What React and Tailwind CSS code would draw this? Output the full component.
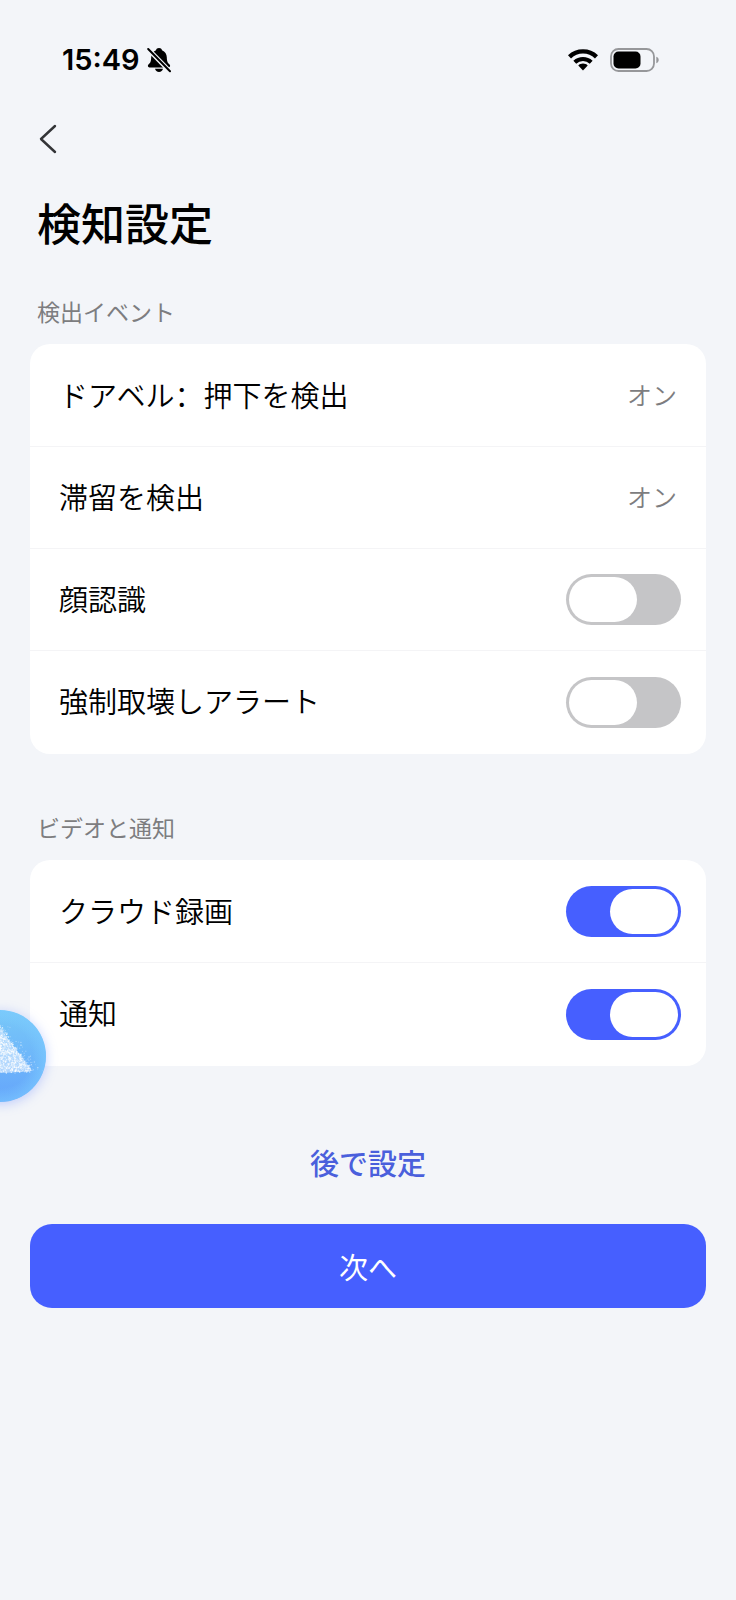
import { useId, useState } from 'react'

const DETECTION_ROWS = [
  {
    // full-width colon set low and left, not centred
    label: (
      <>
        ドアベル
        <span lang="zh-CN" className="font-['Noto_Sans_CJK_SC',sans-serif]">
          ：
        </span>
        押下を検出
      </>
    ),
    value: 'オン',
  },
  { label: '滞留を検出', value: 'オン' },
  { label: '顔認識', on: false },
  { label: '強制取壊しアラート', on: false },
]

const VIDEO_ROWS = [
  { label: 'クラウド録画', on: true },
  { label: '通知', on: true },
]

// Fixed-seed scatter, so the assistant bubble looks the same on every render.
function scatter(count, spread, opacity) {
  let seed = 7 + count
  const next = () => {
    seed = (seed * 16807) % 2147483647
    return seed / 2147483647
  }
  return Array.from({ length: count }, () => {
    const down = Math.sqrt(next())
    const side = next() * 2 - 1
    return {
      x: 43 + side * (down * 34 + 1) + next() * spread,
      y: 14 + down * 48 + (next() - 0.5) * 3,
      r: 0.4 + next() * 0.4,
      o: opacity * (0.5 + next() * 0.5),
    }
  })
}

const DOTS = [...scatter(1100, 2, 0.9), ...scatter(300, 14, 0.5)]

function BellOffIcon() {
  return (
    <svg viewBox="0 0 24 26" className="h-[26px] w-6" aria-hidden>
      <path
        fill="#000"
        d="M12 1c-1.600 0-2.700.9-3 2.200C5.900 4.400 4.300 7 4.200 10.200c-.1 4.300-.9 5.600-2.800 7.400-.9.900-.7 2.900 1 2.900h19.200c1.700 0 1.900-2 1-2.900-1.900-1.800-2.700-3.100-2.800-7.400C19.700 7 18.100 4.400 15 3.200 14.700 1.900 13.600 1 12 1z"
      />
      <path fill="#000" d="M8 21.800h8c-.3 2-2 3.200-4 3.200s-3.700-1.200-4-3.200z" />
      <path d="M.5 1.500 23.500 25" stroke="#f3f5f9" strokeWidth="4.600" />
      <path d="M1.200 2 23 24.200" stroke="#000" strokeWidth="2" strokeLinecap="round" />
    </svg>
  )
}

function WifiIcon() {
  return (
    <svg viewBox="0 0 30 22" className="h-[22px] w-[30px]" fill="none" stroke="#000" aria-hidden>
      <path d="M1.500 7.800C9 .6 21 .6 28.500 7.800" strokeWidth="4.400" />
      <path d="M6.800 13.200c4.700-4.300 11.700-4.300 16.400 0" strokeWidth="4.200" />
      <path d="M15 14.500c-1.900 0-3.500.7-4.700 1.900L15 21.500l4.700-5.100c-1.200-1.200-2.800-1.900-4.700-1.900z" fill="#000" stroke="none" />
    </svg>
  )
}

function BatteryIcon() {
  return (
    <svg viewBox="0 0 50 24" className="h-6 w-[50px]" aria-hidden>
      <rect x="1" y="1" width="43" height="22" rx="7.500" fill="none" stroke="#96979a" strokeWidth="1.800" />
      <rect x="3.500" y="3.500" width="27" height="17" rx="5" fill="#000" />
      <path d="M46.300 8.800c1.700.6 2.400 1.900 2.400 3.200s-.7 2.600-2.400 3.200z" fill="#96979a" />
    </svg>
  )
}

function StatusBar() {
  return (
    <div className="flex h-[120px] items-center justify-between pl-[62px] pr-[76px]">
      <div className="flex items-center gap-[7px]">
        <span className="font-['Inter',sans-serif] text-[29px] font-semibold leading-8">15:49</span>
        <BellOffIcon />
      </div>
      <div className="flex items-center gap-3">
        <WifiIcon />
        <BatteryIcon />
      </div>
    </div>
  )
}

function Switch({ id, defaultOn }) {
  const [on, setOn] = useState(defaultOn)
  return (
    <input
      id={id}
      type="checkbox"
      role="switch"
      checked={on}
      onChange={(e) => setOn(e.target.checked)}
      className="h-[51px] w-[115px] shrink-0 cursor-pointer appearance-none rounded-full bg-[#c5c5c7] p-[3px] transition-colors before:block before:h-[45px] before:w-[68px] before:rounded-full before:bg-white before:transition-transform checked:bg-[#465fff] checked:before:translate-x-[41px]"
    />
  )
}

function SettingRow({ label, value, on }) {
  const id = useId()
  return (
    <li className="flex h-[102px] items-center justify-between pl-[29px] pr-[25px]">
      {value ? (
        <>
          <span className="pb-1">{label}</span>
          <span className="pb-1 pr-1 text-[25px] font-[350] text-[#7d7d80]">{value}</span>
        </>
      ) : (
        <>
          <label htmlFor={id} className="pb-1">
            {label}
          </label>
          <Switch id={id} defaultOn={on} />
        </>
      )}
    </li>
  )
}

function SettingSection({ title, rows }) {
  return (
    <section>
      <h2 className="px-[7px] text-[23px] leading-[30px] text-[#7d7d80]">{title}</h2>
      <ul className="mt-[18px] divide-y divide-[#f4f4f6] rounded-[20px] bg-white py-px text-[29px] font-[350] leading-10">
        {rows.map((row, i) => (
          <SettingRow key={i} {...row} />
        ))}
      </ul>
    </section>
  )
}

/** Floating helper, half tucked behind the left edge of the screen. */
function AssistantBubble() {
  return (
    <button
      type="button"
      aria-label="アシスタント"
      className="absolute -left-[46px] top-[1010px] h-[92px] w-[92px] overflow-hidden rounded-full bg-linear-to-b from-[#78c8f8] to-[#65a5fb] shadow-[0_2px_12px_rgba(110,140,255,0.4)]"
    >
      <svg viewBox="0 0 92 92" className="h-full w-full" aria-hidden>
        <defs>
          <radialGradient id="bubble-rim">
            <stop offset="0.7" stopColor="#7fd0ff" stopOpacity="0" />
            <stop offset="1" stopColor="#7ccbff" stopOpacity="0.6" />
          </radialGradient>
        </defs>
        <circle cx="46" cy="46" r="46" fill="url(#bubble-rim)" />
        <path d="M43 14 77 59c-1 3-4 2-9 3l-22 1H12z" fill="#dcecff" fillOpacity="0.6" />
        {DOTS.map((d, i) => (
          <circle key={i} cx={d.x} cy={d.y} r={d.r} fill="#fff" fillOpacity={d.o} />
        ))}
      </svg>
    </button>
  )
}

export default function App() {
  return (
    <div
      lang="ja"
      className="relative min-h-screen overflow-x-hidden bg-[#f3f5f9] font-['Noto_Sans_CJK_JP',sans-serif] text-black"
    >
      <StatusBar />
      <main className="px-[30px] pb-10">
        <button type="button" aria-label="戻る" className="flex h-[38px] w-9 items-center pl-[9px]">
          <svg viewBox="0 0 18 30" className="h-[30px] w-[18px]" fill="none" stroke="#333437" strokeWidth="2.400" aria-hidden>
            <path d="M16 2 2 15l14 13" strokeLinecap="round" strokeLinejoin="round" />
          </svg>
        </button>
        <h1 className="mt-8 px-[7px] text-[44px] font-medium leading-[64px]">検知設定</h1>

        <div className="mt-[42px] flex flex-col gap-[58px]">
          <SettingSection title="検出イベント" rows={DETECTION_ROWS} />
          <SettingSection title="ビデオと通知" rows={VIDEO_ROWS} />
        </div>

        <div className="mt-[72px] flex flex-col items-center gap-[38px]">
          <button type="button" className="px-4 text-[29px] font-medium leading-[48px] text-[#4a5fdc]">
            後で設定
          </button>
          <button
            type="button"
            className="h-[84px] w-full rounded-[22px] bg-[#465fff] text-[29px] leading-10 text-white"
          >
            次へ
          </button>
        </div>
      </main>
      <AssistantBubble />
    </div>
  )
}
